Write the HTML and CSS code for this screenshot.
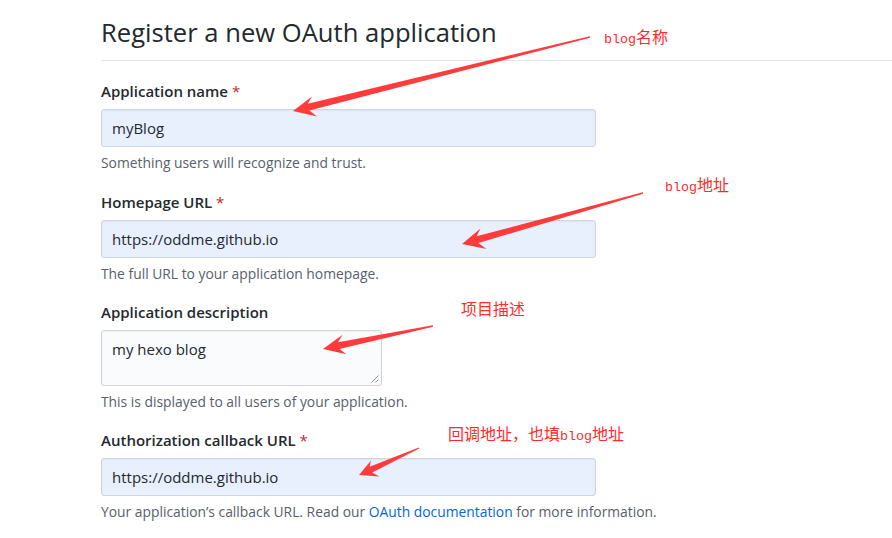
FILE: index.html
```html
<!DOCTYPE html>
<html lang="en">
<head>
<meta charset="utf-8">
<title>Register a new OAuth application</title>
<link rel="stylesheet" href="styles.css">
</head>
<body>
<div class="page">
  <div class="subhead">
    <h1 class="subhead-title">Register a new OAuth application</h1>
  </div>
  <form class="form">
    <div class="group group-first">
      <div class="label">Application name <span class="req">*</span></div>
      <div class="control">myBlog</div>
      <div class="note">Something users will recognize and trust.</div>
    </div>
    <div class="group">
      <div class="label">Homepage URL <span class="req">*</span></div>
      <div class="control">https://oddme.github.io</div>
      <div class="note">The full URL to your application homepage.</div>
    </div>
    <div class="group">
      <div class="label">Application description</div>
      <div class="control textarea">my hexo blog
        <svg class="grip" width="9" height="9" viewBox="0 0 9 9"><path d="M8.5 1.5L1.5 8.5M8.5 5.5L5.5 8.5" stroke="#8a9099" stroke-width="1" fill="none"/></svg>
      </div>
      <div class="note">This is displayed to all users of your application.</div>
    </div>
    <div class="group">
      <div class="label">Authorization callback URL <span class="req">*</span></div>
      <div class="control">https://oddme.github.io</div>
      <div class="note">Your application’s callback URL. Read our <a class="link" href="#">OAuth documentation</a> for more information.</div>
    </div>
  </form>

  <svg class="arrows" width="892" height="538" viewBox="0 0 892 538">
    <polygon fill="#ff3b3b" points="589.8,36.3 307.7,103.7 312,96.5 293,111 317,116.5 309.4,110.5 590.2,37.7"/>
    <polygon fill="#ff3b3b" points="642.8,192.3 476.5,236.3 480.5,228.4 462,244 486.5,249 478.4,243.0 643.2,193.7"/>
    <polygon fill="#ff3b3b" points="432.9,325.3 338.0,342.3 342.5,334.7 323,349 346.5,354.3 339.4,349.1 433.1,326.7"/>
    <polygon fill="#ff3b3b" points="418.8,447.6 369.6,466.8 371,460.5 359,475 379.5,476.5 372.2,472.6 419.2,448.4"/>
  </svg>
  <div class="note-tag tag-1"><span class="lat">blog</span>名称</div>
  <div class="note-tag tag-2"><span class="lat">blog</span>地址</div>
  <div class="note-tag tag-3">项目描述</div>
  <div class="note-tag tag-4">回调地址，也填<span class="lat">blog</span>地址</div>
</div>
</body>
</html>
```

FILE: styles.css
```css
html, body {
  margin: 0;
  padding: 0;
  background: #ffffff;
}

.page {
  position: relative;
  width: 892px;
  height: 538px;
  overflow: hidden;
  padding-left: 101px;
  box-sizing: border-box;
  font-family: "Open Sans", "Noto Sans", sans-serif;
  color: #24292e;
}

.subhead {
  padding-top: 16px;
  padding-bottom: 10px;
  border-bottom: 1px solid #e1e4e8;
  margin-right: -1px;
}

.subhead-title {
  margin: 0;
  font-size: 25.6px;
  line-height: 34px;
  font-weight: 400;
  color: #24292e;
}

.form {
  padding-top: 20px;
}

.group {
  margin-bottom: 19px;
}

.group-first {
  margin-bottom: 20px;
}

.label {
  font-size: 15px;
  line-height: 21px;
  font-weight: 600;
  color: #24292e;
  margin-bottom: 7px;
}

.req {
  color: #cb2431;
  font-weight: 400;
}

.control {
  position: relative;
  width: 495px;
  height: 38px;
  box-sizing: border-box;
  padding: 0 10px;
  border: 1px solid #d1d5da;
  border-radius: 3px;
  background: #e8f0fe;
  font-size: 15px;
  line-height: 36px;
  color: #24292e;
  box-shadow: inset 0 1px 2px rgba(27, 31, 35, 0.05);
}

.textarea {
  width: 281px;
  height: 56px;
  background: #fafbfc;
  line-height: 36px;
}

.grip {
  position: absolute;
  right: 2px;
  bottom: 2px;
}

.note {
  margin-top: 6px;
  font-size: 13.85px;
  line-height: 19px;
  color: #586069;
}

.link {
  color: #0366d6;
  text-decoration: none;
}

.arrows {
  position: absolute;
  left: 0;
  top: 0;
  pointer-events: none;
}

.note-tag {
  position: absolute;
  font-family: "Noto Sans CJK SC", sans-serif;
  font-size: 16px;
  line-height: 20px;
  color: #ff2b2b;
  white-space: nowrap;
}

.lat {
  font-family: "Liberation Mono", monospace;
  font-size: 13.33px;
}

.tag-1 { left: 604px; top: 26px; }
.tag-2 { left: 665px; top: 174px; }
.tag-3 { left: 461px; top: 298px; }
.tag-4 { left: 448px; top: 423px; }
```
